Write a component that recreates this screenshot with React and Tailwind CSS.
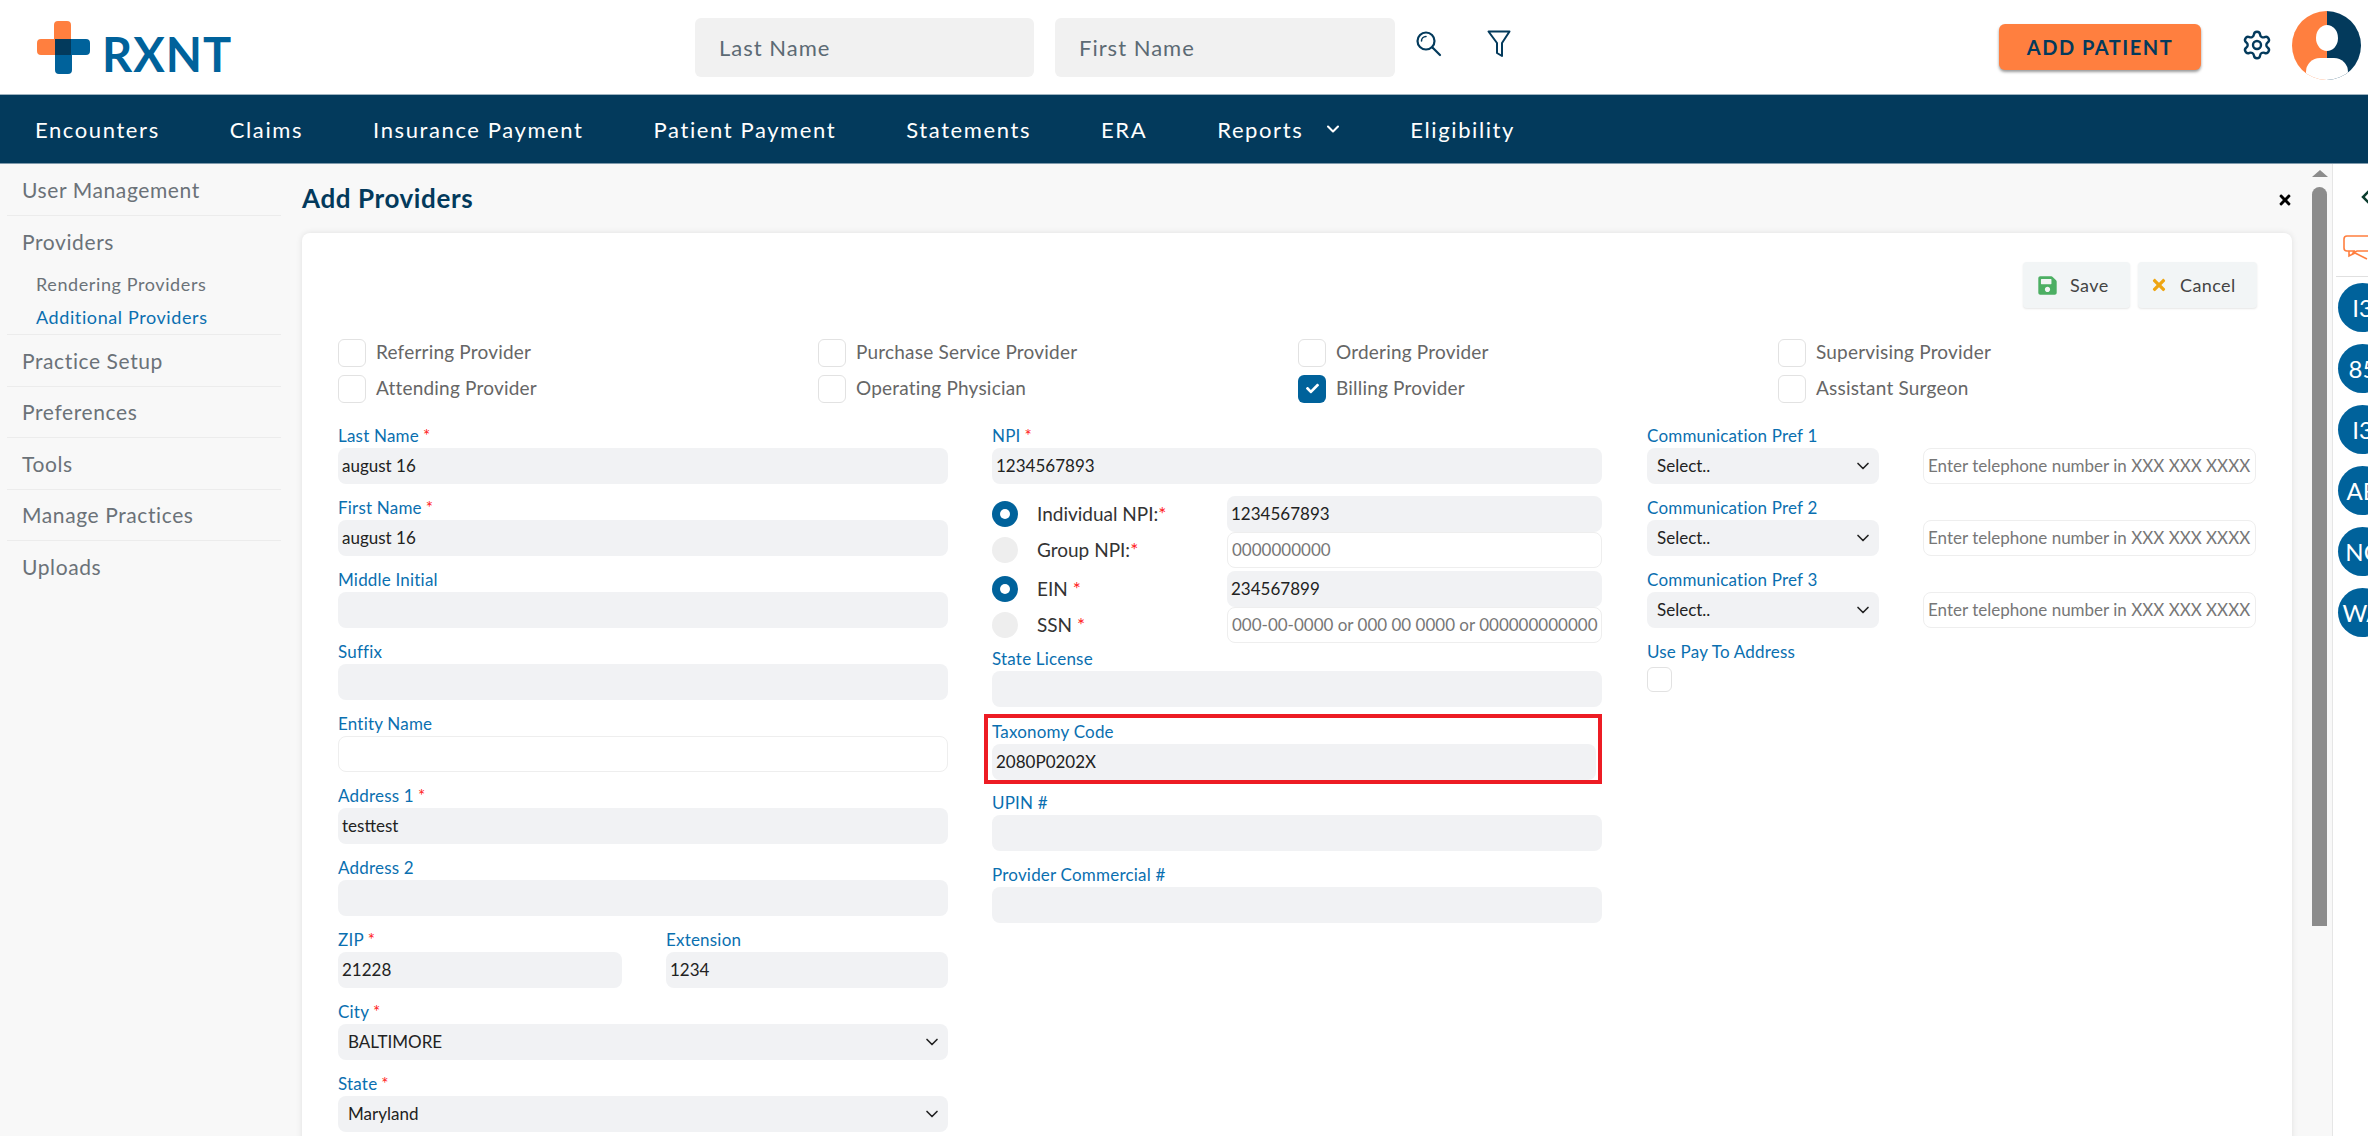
import { ChevronDown, Settings } from "lucide-react";
import { FaSave, FaTimes, FaCheck } from "react-icons/fa";

const navItems = ["Encounters", "Claims", "Insurance Payment", "Patient Payment", "Statements", "ERA"];
const font = { fontFamily: "Lato, sans-serif" };

const Req = () => <span className="text-[#ff1a1a] ml-1">*</span>;

const Label = ({ text, req, h = "h-[36px]" }) => (
  <div className={`${h} flex items-end`}>
    <span className="text-[17px] leading-6 text-[#0a6fb0] tracking-[0.2px] whitespace-nowrap">
      {text}
      {req && <Req />}
    </span>
  </div>
);

const Box = ({ value, placeholder, empty, className = "" }) => (
  <div
    className={`h-[36px] rounded-lg flex items-center px-1 text-[17px] overflow-hidden whitespace-nowrap ${
      empty ? "bg-white border border-[#eeeeee]" : "bg-[#f1f2f4]"
    } ${placeholder ? "text-[#777]" : "text-[#222]"} ${className}`}
  >
    {value || placeholder}
  </div>
);

const Field = ({ label, req, value, empty, labelH }) => (
  <div>
    <Label text={label} req={req} h={labelH} />
    <Box value={value} empty={empty} />
  </div>
);

const SelectBox = ({ value, className = "" }) => (
  <div className={`h-[36px] rounded-lg bg-[#f1f2f4] flex items-center justify-between pl-[10px] pr-[6px] text-[17px] text-[#222] ${className}`}>
    <span>{value}</span>
    <ChevronDown size={20} strokeWidth={2} className="text-[#222]" />
  </div>
);

const Check = ({ label, checked }) => (
  <div className="flex items-center gap-[10px] h-[29px]">
    <div className={`w-[28px] h-[28px] rounded-md flex items-center justify-center ${checked ? "bg-[#00629b]" : "border border-[#e2e2e2]"}`}>
      {checked && <FaCheck size={13} color="white" />}
    </div>
    <span className="text-[19px] text-[#666] tracking-[0.2px]">{label}</span>
  </div>
);

const RadioRow = ({ label, req, on, value, placeholder, rowClass }) => (
  <div className={`flex items-center ${rowClass}`}>
    <div className={`w-[26px] h-[26px] rounded-full flex items-center justify-center shrink-0 ${on ? "bg-[#00629b]" : "bg-[#eeeeee]"}`}>
      {on && <div className="w-[10px] h-[10px] rounded-full bg-white" />}
    </div>
    <span className="w-[209px] pl-[19px] text-[19px] text-[#333] whitespace-nowrap">
      {label}
      {req && <span className="text-[#ff1a1a]">*</span>}
    </span>
    <Box value={value} placeholder={placeholder} empty={!value} className="flex-1 min-w-0" />
  </div>
);

const Logo = () => (
  <div className="flex items-end ml-[37px] w-[658px]">
    <svg width="53" height="53" viewBox="0 0 53 53">
      <path d="M21 0h9a4 4 0 0 1 4 4v30H4a4 4 0 0 1-4-4V22a4 4 0 0 1 4-4h13V4a4 4 0 0 1 4-4z" fill="#ff7f3f" />
      <path d="M18 18h31a4 4 0 0 1 4 4v8a4 4 0 0 1-4 4H35v15a4 4 0 0 1-4 4h-9a4 4 0 0 1-4-4z" fill="#00629b" />
      <path d="M18 18h16v16H18z" fill="#033a5c" />
    </svg>
    <span className="ml-[12px] text-[47px] leading-[40px] font-bold text-[#00629b] tracking-[1px]">RXNT</span>
  </div>
);

const Avatar = () => (
  <svg width="69" height="69" viewBox="0 0 69 69">
    <defs>
      <clipPath id="av">
        <circle cx="34.5" cy="34.5" r="34.5" />
      </clipPath>
    </defs>
    <g clipPath="url(#av)">
      <rect width="35" height="69" fill="#ff7f3f" />
      <rect x="35" width="34" height="69" fill="#033a5c" />
      <ellipse cx="35" cy="27" rx="11" ry="13" fill="white" />
      <rect x="14" y="47" width="42" height="30" rx="14" fill="white" />
    </g>
  </svg>
);

export default function App() {
  return (
    <div className="w-[2368px] h-[1136px] overflow-hidden bg-[#f8f8f8] flex flex-col" style={font}>
      {/* top bar */}
      <div className="h-[95px] bg-white border-b border-[#9fb3c0] flex items-center shrink-0">
        <Logo />
        <div className="w-[339px] h-[59px] rounded-md bg-[#f1f1f1] flex items-center pl-6 text-[22px] text-[#5c6a74] tracking-[1px]">Last Name</div>
        <div className="w-[340px] h-[59px] rounded-md bg-[#f1f1f1] flex items-center pl-6 ml-[21px] text-[22px] text-[#5c6a74] tracking-[1px]">First Name</div>
        <svg width="26" height="26" viewBox="0 0 26 26" fill="none" stroke="#033a5c" strokeWidth="2.2" strokeLinecap="round" className="ml-[21px] -mt-[6px]">
          <circle cx="10" cy="10" r="8.5" />
          <path d="M16.5 16.5L24 24" />
          <path d="M5.5 10a4.5 4.5 0 0 1 4.5-4.5" strokeWidth="1.5" />
        </svg>
        <svg width="24" height="28" viewBox="0 0 24 28" fill="none" stroke="#033a5c" strokeWidth="2" strokeLinejoin="round" className="ml-[45px] -mt-[6px]">
          <path d="M1.5 1.5h21L15 13v13l-5-3V13z" />
        </svg>
        <div className="ml-[488px] w-[202px] h-[46px] rounded-md bg-[#ff7f3f] shadow-[0_2px_3px_rgba(0,0,0,0.4)] flex items-center justify-center text-[20px] font-bold text-[#033a5c] tracking-[1.5px] -mt-[1px]">
          ADD PATIENT
        </div>
        <Settings size={32} strokeWidth={1.8} className="text-[#033a5c] ml-[40px] -mt-[4px]" />
        <div className="ml-[19px] -mt-[3px]">
          <Avatar />
        </div>
      </div>

      {/* nav */}
      <div className="h-[69px] bg-[#033a5c] border-b border-[#7f9aac] flex items-center pl-[35px] gap-[70px] text-[22px] text-white tracking-[1.6px] shrink-0">
        {navItems.map((n) => (
          <span key={n}>{n}</span>
        ))}
        <span className="flex items-center gap-[20px]">
          Reports
          <ChevronDown size={20} strokeWidth={2.5} />
        </span>
        <span className="-ml-[3px]">Eligibility</span>
      </div>

      <div className="flex flex-1 min-h-0">
        {/* sidebar */}
        <div className="w-[302px] pl-[7px] pr-[21px] shrink-0 text-[21px] text-[#6b7278] tracking-[0.6px]">
          <div className="h-[52px] border-b border-[#ececec] flex items-center pl-[15px]">User Management</div>
          <div className="border-b border-[#ececec]">
            <div className="h-[52px] flex items-center pl-[15px]">Providers</div>
            <div className="h-[33px] flex items-center pl-[29px] text-[18px]">Rendering Providers</div>
            <div className="h-[33px] flex items-center pl-[29px] text-[18px] text-[#0a6fb0]">Additional Providers</div>
          </div>
          {["Practice Setup", "Preferences", "Tools", "Manage Practices", "Uploads"].map((s) => (
            <div key={s} className="h-[51.5px] border-b border-[#ececec] last:border-b-0 flex items-center pl-[15px]">
              {s}
            </div>
          ))}
        </div>

        {/* main */}
        <div className="w-[1990px] shrink-0">
          <div className="h-[69px] flex items-center justify-between pb-[1px]">
            <span className="text-[26px] font-bold text-[#033a5c] tracking-[0.6px]">Add Providers</span>
            <FaTimes size={16} className="text-black -mr-[1px] mt-[4px]" />
          </div>
          <div className="bg-white rounded-lg h-[920px] shadow-[0_0_6px_rgba(0,0,0,0.1)] pt-[29px] pl-[36px] pr-[34px]">
            <div className="flex justify-end gap-2 pr-[1px]">
              <div className="w-[107px] h-[46px] rounded bg-[#f2f5f6] shadow-[0_1px_2px_rgba(0,0,0,0.1)] flex items-center gap-3 pl-[14px] text-[18px] text-[#444] tracking-[0.4px]">
                <FaSave size={21} className="text-[#4caf63]" />
                Save
              </div>
              <div className="w-[119px] h-[46px] rounded bg-[#f2f5f6] shadow-[0_1px_2px_rgba(0,0,0,0.1)] flex items-center gap-3 pl-[12px] text-[18px] text-[#444] tracking-[0.4px]">
                <FaTimes size={18} className="text-[#eea512]" />
                Cancel
              </div>
            </div>

            <div className="grid grid-cols-4 gap-y-[7px] mt-[30px] w-[1920px]">
              <Check label="Referring Provider" />
              <Check label="Purchase Service Provider" />
              <Check label="Ordering Provider" />
              <Check label="Supervising Provider" />
              <Check label="Attending Provider" />
              <Check label="Operating Physician" />
              <Check label="Billing Provider" checked />
              <Check label="Assistant Surgeon" />
            </div>

            <div className="flex mt-[9px]">
              {/* left column */}
              <div className="w-[610px] shrink-0">
                <Field label="Last Name" req value="august 16" />
                <Field label="First Name" req value="august 16" />
                <Field label="Middle Initial" />
                <Field label="Suffix" />
                <Field label="Entity Name" empty />
                <Field label="Address 1" req value="testtest" />
                <Field label="Address 2" />
                <div className="flex gap-[44px]">
                  <div className="w-[284px]">
                    <Field label="ZIP" req value="21228" />
                  </div>
                  <div className="flex-1">
                    <Field label="Extension" value="1234" />
                  </div>
                </div>
                <Label text="City" req />
                <SelectBox value="BALTIMORE" />
                <Label text="State" req />
                <SelectBox value="Maryland" />
              </div>

              {/* middle column */}
              <div className="w-[610px] ml-[44px] shrink-0">
                <Field label="NPI" req value="1234567893" />
                <RadioRow label="Individual NPI:" req on value="1234567893" rowClass="mt-3" />
                <RadioRow label="Group NPI:" req placeholder="0000000000" rowClass="" />
                <RadioRow label="EIN " req on value="234567899" rowClass="mt-[3px]" />
                <RadioRow label="SSN " req placeholder="000-00-0000 or 000 00 0000 or 000000000000" rowClass="" />
                <Field label="State License" labelH="h-[28px]" />
                <div className="-ml-2 mt-[7px] h-[70px] border-4 border-[#ed1c24] pl-1 pr-0.5">
                  <div className="h-[26px] flex items-end">
                    <span className="text-[17px] leading-6 text-[#0a6fb0] tracking-[0.2px]">Taxonomy Code</span>
                  </div>
                  <Box value="2080P0202X" className="h-[34px]" />
                </div>
                <Field label="UPIN #" labelH="h-[31px]" />
                <Field label="Provider Commercial #" />
              </div>

              {/* right column */}
              <div className="w-[609px] ml-[45px] shrink-0">
                {["Communication Pref 1", "Communication Pref 2", "Communication Pref 3"].map((c) => (
                  <div key={c}>
                    <Label text={c} />
                    <div className="flex gap-[44px]">
                      <SelectBox value="Select.." className="w-[232px]" />
                      <Box placeholder="Enter telephone number in XXX XXX XXXX" empty className="w-[333px]" />
                    </div>
                  </div>
                ))}
                <Label text="Use Pay To Address" />
                <div className="w-[25px] h-[25px] rounded-md border border-[#e2e2e2] mt-[3px]" />
              </div>
            </div>
          </div>
        </div>

        {/* scrollbar */}
        <div className="w-[40px] shrink-0 pl-[20px] pr-[5px] pt-[6px]">
          <div className="w-0 h-0 border-x-[8px] border-x-transparent border-b-[7px] border-b-[#8c8c8c]" />
          <div className="w-[15px] h-[739px] bg-[#8c8c8c] rounded-t-full mt-[10px]" />
        </div>

        {/* right strip */}
        <div className="w-[36px] shrink-0 bg-white border-l border-[#e6e6e6] overflow-hidden pl-[5px]">
          <svg width="10" height="16" viewBox="0 0 10 16" fill="none" stroke="#0b3d2e" strokeWidth="2.5" className="ml-[23px] mt-[25px]">
            <path d="M9 1L2 8l7 7" />
          </svg>
          <svg width="30" height="26" viewBox="0 0 30 26" fill="none" stroke="#ff7f3f" strokeWidth="1.6" className="ml-[5px] mt-[30px]">
            <path d="M4 1h30v15H14l-4 2 1-2-3 0H4a3 3 0 0 1-3-3V4a3 3 0 0 1 3-3z" />
            <path d="M6 16l0 5 6-3 12 6" />
          </svg>
          <div className="h-px bg-[#e0e0e0] -ml-[2px] mt-[15px] w-[40px]" />
          <div className="flex flex-col gap-[12px] mt-[6px]">
            {["I3", "85", "I3", "AB", "NC", "WA"].map((t, i) => (
              <div key={i} className="w-[49px] h-[49px] rounded-full bg-[#00629b] text-white text-[24px] flex items-center justify-center shrink-0">
                {t}
              </div>
            ))}
          </div>
        </div>
      </div>
    </div>
  );
}
